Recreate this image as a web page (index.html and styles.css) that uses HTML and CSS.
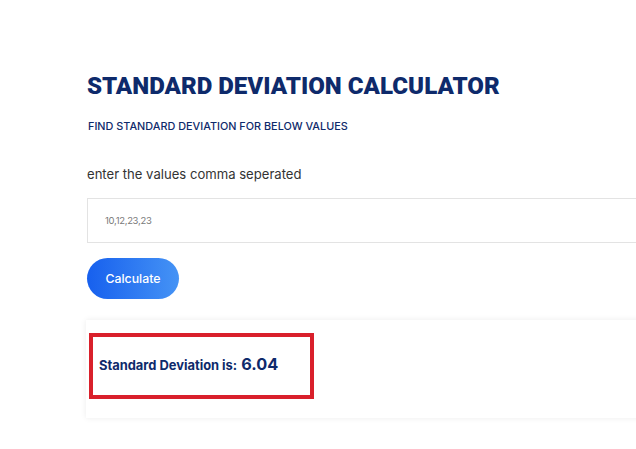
FILE: index.html
```html
<!DOCTYPE html>
<html>
<head>
<meta charset="utf-8">
<link rel="stylesheet" href="styles.css">
</head>
<body>
<main class="page">
  <h1 class="title">STANDARD DEVIATION CALCULATOR</h1>
  <h2 class="subtitle">FIND STANDARD DEVIATION FOR BELOW VALUES</h2>
  <label class="label" for="vals">enter the values comma seperated</label>
  <div class="input-box"><span class="input-text">10,12,23,23</span></div>
  <button class="btn">Calculate</button>
  <section class="card">
    <div class="result">
      <span class="result-label">Standard Deviation is:</span>
      <span class="result-value">6.04</span>
    </div>
  </section>
</main>
</body>
</html>
```

FILE: styles.css
```css
* { box-sizing: border-box; }
html, body { margin: 0; padding: 0; background: #ffffff; }
body { width: 636px; height: 449px; overflow: hidden; }
.page {
  display: flex;
  flex-direction: column;
  align-items: flex-start;
  padding: 71px 0 0 87px;
  font-family: Inter, "Liberation Sans", sans-serif;
}
.title {
  margin: 0;
  font-family: Roboto, sans-serif;
  font-weight: 900;
  font-size: 24.1px;
  line-height: 30px;
  color: #0e2a6b;
  letter-spacing: 0;
}
.subtitle {
  margin: 19px 0 0 1px;
  font-weight: 500;
  font-size: 10.85px;
  line-height: 13px;
  color: #0e2a6b;
}
.label {
  margin-top: 34px;
  font-size: 13.1px;
  line-height: 15px;
  color: #333333;
}
.input-box {
  margin-top: 16px;
  width: 560px;
  height: 45px;
  border: 1px solid #e3e3e3;
  display: flex;
  align-items: center;
  padding-left: 17px;
}
.input-text {
  font-size: 9.5px;
  color: #7a7a7a;
  letter-spacing: -0.3px;
}
.btn {
  margin-top: 15px;
  width: 92px;
  height: 41px;
  border: none;
  border-radius: 21px;
  background: linear-gradient(90deg, #1760ee 0%, #4593f5 100%);
  color: #ffffff;
  font-family: Inter, sans-serif;
  font-size: 12.3px;
  font-weight: 500;
  padding: 0;
}
.card {
  margin-top: 21px;
  margin-left: -1px;
  width: 560px;
  height: 98px;
  background: #ffffff;
  box-shadow: 0 0 6px rgba(0,0,0,0.08);
  padding: 13px 0 0 3px;
}
.result {
  width: 225px;
  height: 66px;
  border: 4px solid #d9202b;
  display: flex;
  align-items: baseline;
  padding: 17px 0 0 6px;
  gap: 4px;
}
.result-label {
  font-weight: 700;
  font-size: 12.9px;
  color: #0e2a6b;
}
.result-value {
  font-weight: 700;
  font-size: 16.3px;
  color: #0e2a6b;
}
```
